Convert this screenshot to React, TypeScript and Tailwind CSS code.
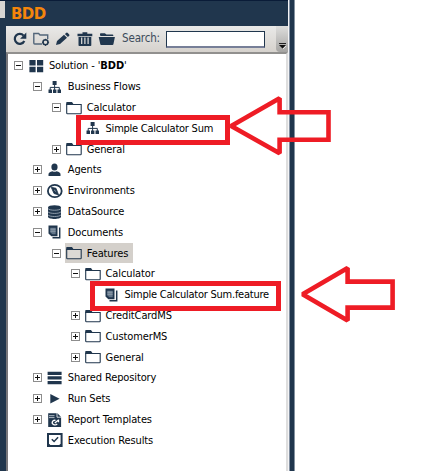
import React from 'react';

const NAVY = '#20364d';

type IconName = 'grid' | 'flow' | 'folder' | 'agent' | 'compass' | 'database' | 'docs' | 'shelves' | 'play' | 'report' | 'check';

function Icon({ name }: { name: IconName }) {
  const svg = { width: 16, height: 16, viewBox: '0 0 16 16', className: 'block shrink-0' };
  switch (name) {
    case 'grid':
      return (
        <svg {...svg} fill={NAVY}>
          <path d="M.4 2h6.2v5.4H.4zM8 2h6.2v5.4H8zM.4 8.8h6.2v5.4H.4zM8 8.8h6.2v5.4H8z" />
        </svg>
      );
    case 'flow':
      return (
        <svg {...svg} fill={NAVY}>
          <path d="M5.6 2h4v4h-4zM1.5 10.5H5V14H1.5zM6 10.5h3.4V14H6zM10.5 10.5H14V14h-3.5z" />
          <path d="M7.6 5v6M3.2 11V8.4h9.1V11" fill="none" stroke={NAVY} strokeWidth="1" />
        </svg>
      );
    case 'folder':
      return (
        <svg {...svg}>
          <path d="M.7 13V4.5h14.5V13q0 .8-.8.8H1.5q-.8 0-.8-.8z" fill="#fff" fillOpacity=".2" stroke={NAVY} strokeWidth="1.1" />
          <path d="M.2 5V2.8Q.2 2 1 2h5l1.4 2H15v1z" fill={NAVY} />
        </svg>
      );
    case 'agent':
      return (
        <svg {...svg} fill={NAVY}>
          <ellipse cx="7.5" cy="5" rx="3.1" ry="3.6" />
          <path d="M1.5 14v-1.8q0-2.2 4-3 2 1.3 4 0 4 .8 4 3V14z" />
        </svg>
      );
    case 'compass':
      return (
        <svg {...svg}>
          <ellipse cx="7.8" cy="8" rx="6.9" ry="6.2" fill="#fff" stroke={NAVY} strokeWidth="1.8" />
          <path d="M4.2 4.2 9 5.3l2.6 6.6L7 10.5z" fill={NAVY} stroke={NAVY} strokeWidth=".8" />
          <path d="m7 6.8 2.2 2" stroke="#8492a2" />
        </svg>
      );
    case 'database':
      return (
        <svg {...svg} fill={NAVY}>
          <path d="M1 3.5v9.2C1 15.6 14 15.6 14 12.7V3.5z" />
          <ellipse cx="7.5" cy="3.4" rx="6.5" ry="2.2" />
          <path d="M1 4.5c1 2.3 12 2.3 13 0M1 7.7c1 2.3 12 2.3 13 0M1 10.8c1 2.3 12 2.3 13 0" fill="none" stroke="#b9c3ce" strokeWidth=".7" />
        </svg>
      );
    case 'docs':
      return (
        <svg {...svg}>
          <path d="M1.5 1.5h9v10.8H4.4L1.5 9.5z" fill={NAVY} />
          <path d="M3.3 3.7h5.4v6.6H5.6L3.3 8.5z" fill="#63768a" />
          <path d="M3.3 5.2h5.4M3.3 7.2h5.4" stroke="#a8b3be" strokeWidth=".7" />
          <path d="M12.7 3.5v10.3H5.5" fill="none" stroke={NAVY} strokeWidth="1.5" />
        </svg>
      );
    case 'shelves':
      return (
        <svg {...svg} fill={NAVY}>
          <path d="M.6 1.7h14v3.3H.6zM.6 6.3h14v3.3H.6zM.6 11h14v3.3H.6z" />
        </svg>
      );
    case 'play':
      return (
        <svg {...svg} fill={NAVY}>
          <path d="M3.3 3 12.6 7.8l-9.3 4.7z" />
        </svg>
      );
    case 'report':
      return (
        <svg {...svg}>
          <path d="M1.2 1.2h9.3l3.6 3.8v10H1.2z" fill={NAVY} />
          <path d="M2 3.7h5.5M2 5.6h5.5" stroke="#d6dde4" strokeWidth=".8" />
          <path d="M10 1v4.2h4.4" fill="none" stroke="#fff" strokeWidth=".8" />
          <path d="M8.5 8.3a2.7 2.3 0 1 0 1.7 3.5M7.8 11l3.7-3M11.5 7.5v2.8" fill="none" stroke="#fff" strokeWidth="1.3" />
        </svg>
      );
    case 'check':
      return (
        <svg {...svg}>
          <path d="M0 1h15.6v14H0z" fill={NAVY} />
          <path d="M2 3h11.6v8.5L12.3 13h-9L2 11.5z" fill="#fff" />
          <path d="m4.8 7.2 2.3 2.3 4-4.2" fill="none" stroke={NAVY} strokeWidth="1.5" />
        </svg>
      );
  }
}

function Toggle({ state }: { state?: 'open' | 'closed' }) {
  if (!state) return <span className="w-[9px] shrink-0" />;
  return (
    <svg width="9" height="9" viewBox="0 0 9 9" className="block shrink-0" shapeRendering="crispEdges">
      <path d="M.5.5h8v8h-8z" fill="#fff" stroke="#8d8d8d" />
      <path d={state === 'open' ? 'M2 4.5h5' : 'M2 4.5h5M4.5 2v5'} stroke="#111" />
    </svg>
  );
}

interface Row {
  label: string;
  level: number;
  icon: IconName;
  state?: 'open' | 'closed';
  selected?: boolean;
}

const rows: Row[] = [
  { label: 'Solution - ', level: 0, icon: 'grid', state: 'open' },
  { label: 'Business Flows', level: 1, icon: 'flow', state: 'open' },
  { label: 'Calculator', level: 2, icon: 'folder', state: 'open' },
  { label: 'Simple Calculator Sum', level: 3, icon: 'flow' },
  { label: 'General', level: 2, icon: 'folder', state: 'closed' },
  { label: 'Agents', level: 1, icon: 'agent', state: 'closed' },
  { label: 'Environments', level: 1, icon: 'compass', state: 'closed' },
  { label: 'DataSource', level: 1, icon: 'database', state: 'closed' },
  { label: 'Documents', level: 1, icon: 'docs', state: 'open' },
  { label: 'Features', level: 2, icon: 'folder', state: 'open', selected: true },
  { label: 'Calculator', level: 3, icon: 'folder', state: 'open' },
  { label: 'Simple Calculator Sum.feature', level: 4, icon: 'docs' },
  { label: 'CreditCardMS', level: 3, icon: 'folder', state: 'closed' },
  { label: 'CustomerMS', level: 3, icon: 'folder', state: 'closed' },
  { label: 'General', level: 3, icon: 'folder', state: 'closed' },
  { label: 'Shared Repository', level: 1, icon: 'shelves', state: 'closed' },
  { label: 'Run Sets', level: 1, icon: 'play', state: 'closed' },
  { label: 'Report Templates', level: 1, icon: 'report', state: 'closed' },
  { label: 'Execution Results', level: 1, icon: 'check' },
];

function TreeRow({ row }: { row: Row }) {
  const tracking = row.label.startsWith('Simple') ? 'tracking-[-0.24px]' : 'tracking-[-0.12px]';
  return (
    <div className="flex h-[20.8px] items-center" style={{ paddingLeft: 6 + row.level * 18.9 }}>
      <Toggle state={row.state} />
      <div className={`ml-1 flex h-5 items-center gap-[4.3px] pr-[4.5px] pl-[1.6px] ${row.selected ? 'bg-[#d4d0cb]' : ''}`}>
        <Icon name={row.icon} />
        <span className={`text-[11px] leading-none whitespace-pre ${tracking}`}>
          {row.label}
          {row.level === 0 && <>'<b>BDD</b>'</>}
        </span>
      </div>
    </div>
  );
}

function Toolbar() {
  return (
    <div className="flex h-[26px] shrink-0 items-center bg-linear-to-b from-[#e9e9e8] to-[#d6d2cd] pl-[7px]">
      <svg width="104" height="18" viewBox="0 0 104 18" className="block shrink-0" fill={NAVY}>
        <path d="M10.6 5.6A5 5 0 1 0 11.3 11" fill="none" stroke={NAVY} strokeWidth="2.2" />
        <path d="M13.3 2.5v6.3H7.1z" />
        <path d="M29 14H21.7q-.9 0-.9-.9V3.5h4.8L27 5h7.7v4" fill="none" stroke="#53667a" strokeWidth="1.4" />
        <circle cx="32.5" cy="12.3" r="2.5" fill="none" stroke={NAVY} strokeWidth="1.5" />
        <path d="M32.5 8.8v1.5M32.5 14.3v1.6M29 12.3h1.5M34.5 12.3h1.6" stroke={NAVY} />
        <path d="m43 15 1-4 7-6.2 3 3-7 6.2zM51.9 4l1.5-1.2q.7-.5 1.4.2l1.4 1.4q.6.7 0 1.3l-1.3 1.3z" />
        <path d="M69.5 2.2h4.8v1.6h5v2.4H64.5V3.8h5z" />
        <path d="M65.5 7h12.8v8.3q0 .7-.7.7H66.2q-.7 0-.7-.7z" />
        <path d="M68.7 7.5V14M71.9 7.5V14M75.1 7.5V14" stroke="#e2e0dd" strokeWidth="1.2" />
        <path d="M87 5V4q0-.8.8-.8h4l1.7 1.3h6q.8 0 .8.8V6H87.5z" />
        <path d="M85.7 7h16.2l-1.5 7.3q-.2.7-.9.7H88.1q-.7 0-.8-.7z" />
      </svg>
      <span className="ml-[5px] w-[43.5px] text-[11.5px] leading-none tracking-[-0.15px] whitespace-nowrap text-[#3c4b5b]">Search:</span>
      <div className="h-[17px] w-[99px] border border-b-2 border-[#20364d] border-b-[#777f98] bg-white" />
      <div className="ml-auto flex h-full w-[12px] items-end justify-center rounded-bl bg-linear-to-b from-[#dededd] to-[#a5a4a2] pb-[3px]">
        <svg width="7" height="6" viewBox="0 0 7 6" className="block">
          <path d="M0 .5h7" stroke="#222" />
          <path d="M0 2h7L3.5 5.5z" fill="#111" />
          <path d="m4 6 3-3" stroke="#fff" strokeWidth=".7" />
        </svg>
      </div>
    </div>
  );
}

function Arrow({ className, path }: { className: string; path: string }) {
  return (
    <svg width="104" height="64" viewBox="0 0 104 64" className={`absolute ${className}`}>
      <path d={path} fill="none" stroke="#ee1c25" strokeWidth="4.6" strokeLinejoin="miter" strokeMiterlimit="1.7" />
    </svg>
  );
}

export default function App() {
  return (
    <div className="relative h-[471px] w-[447px] overflow-hidden bg-white font-['DejaVu_Sans_Condensed','DejaVu_Sans',sans-serif] [font-stretch:condensed] text-black">
      <div className="flex h-full w-[295px] bg-[#20364d]">
        <div className="w-[6px] shrink-0 border-t border-[#0a1c38]">
          <div className="h-[17px] w-[5px] bg-[#d7d5d2]" />
        </div>
        <div className="flex w-[282px] flex-col">
          <div className="flex h-[26px] shrink-0 items-center border-t border-[#0a1c38] pt-px pl-[5px]">
            <h1 className="font-['DejaVu_Sans',sans-serif] text-[15px] leading-none font-bold tracking-[-0.6px] text-[#f5850b] [font-stretch:normal]">BDD</h1>
          </div>
          <Toolbar />
          <div className="flex-1 border-t-2 border-r-2 border-l-2 border-t-[#91908e] border-r-[#dedede] border-l-[#77767a] bg-white pt-[1.6px]">
            {rows.map((row, i) => (
              <TreeRow key={i} row={row} />
            ))}
          </div>
        </div>
        <div className="w-px bg-[#f4f4f6]" />
        <div className="w-px bg-[#8592a3]" />
        <div className="w-[4px]" />
        <div className="w-px bg-[#8492a0]" />
      </div>
      <div className="absolute top-[115px] left-[76px] h-[30px] w-[154px] border-[5px] border-[#ee1c25]" />
      <div className="absolute top-[281px] left-[90px] h-[30px] w-[191px] border-[5px] border-[#ee1c25]" />
      <Arrow className="top-[94px] left-[228px]" path="M3.2 32 51.6 4.3v14H100.5v27.4H51.6v13.6z" />
      <Arrow className="top-[262px] left-[298px]" path="M4.6 32.2 49.6 6v13.6h45v26h-45v12.8z" />
    </div>
  );
}
